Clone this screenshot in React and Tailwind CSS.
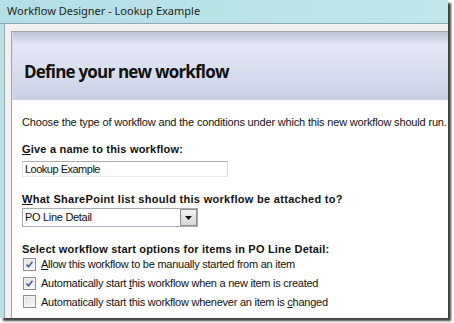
import { useState } from 'react';

const body = { fontFamily: "Tahoma, 'Liberation Sans', Arial, sans-serif" };

function Check({ checked }) {
  return (
    <span className="w-[13px] h-[13px] shrink-0 border border-[#8f8f8f] bg-gradient-to-br from-[#dcdcdc] to-[#fafafa] flex items-center justify-center">
      <span className="w-[11px] h-[11px] border border-[#f4f4f4] bg-gradient-to-br from-[#e0e0e0] to-[#f8f8f8] flex items-center justify-center">
        {checked && (
          <svg viewBox="0 0 9 9" className="w-[9px] h-[9px]">
            <path d="M1.5 4.5l2 2.2 4-5" stroke="#4a5e9e" strokeWidth="1.6" fill="none" />
          </svg>
        )}
      </span>
    </span>
  );
}

function Option({ checked, children }) {
  return (
    <label className="flex items-center gap-[5px] h-[18.75px]">
      <Check checked={checked} />
      <span className="text-[11px] text-[#111] tracking-[-0.25px] whitespace-nowrap">{children}</span>
    </label>
  );
}

export default function App() {
  const [name, setName] = useState('Lookup Example');

  return (
    <div className="w-[454px] h-[323px] bg-white overflow-hidden">
      <div className="w-[448px] h-[318px] flex flex-col bg-[#b8e1e6] shadow-[3px_3px_2px_rgba(0,0,0,0.75)]">
        {/* title bar */}
        <div className="h-[24px] flex items-center pl-[7px] bg-gradient-to-r from-[#b4dfe5] to-[#bfe6ea] border-b border-[#8eaab0] text-[11px] text-[#1e1e1e]" style={{ fontFamily: "'Segoe UI', 'Noto Sans', sans-serif" }}>
          Workflow Designer - Lookup Example
        </div>

        <div className="flex-1 flex pl-[4px] min-h-0">
          <div className="flex-1 flex flex-col bg-[#f1f1f1] border-l border-[#9aa7aa] pl-[6px] pt-[7px] min-h-0">
            <div className="flex-1 flex flex-col bg-white border-l border-t border-[#a3a3a3] min-h-0" style={body}>
              {/* header */}
              <div className="h-[68px] shrink-0 flex items-center pl-[11px] pt-[11px] bg-gradient-to-b from-[#bcc3d5] via-[#e6e9f5] via-20% to-[#c9d0e5] border-l border-[#d8dcec]">
                <h1 className="text-[17px] font-bold text-[#111] tracking-[-0.8px]" style={{ fontFamily: "'Segoe UI', 'Open Sans', sans-serif" }}>
                  Define your new workflow
                </h1>
              </div>

              {/* body */}
              <div className="pl-[10px] pt-[15px] text-[11px] text-[#111] whitespace-nowrap">
                <p className="leading-[15px] tracking-[-0.17px]">
                  Choose the type of workflow and the conditions under which this new workflow should run.
                </p>

                <p className="mt-[12px] leading-[15px] font-bold tracking-[0.2px]">
                  <span className="underline">G</span>ive a name to this workflow:
                </p>
                <input
                  value={name}
                  onChange={(e) => setName(e.target.value)}
                  className="mt-[4px] block w-[206px] h-[16px] px-[2px] text-[11px] tracking-[-0.5px] border border-[#abadb3] border-l-[#e2e3ea] border-r-[#dbdfe6] border-b-[#e3e9ef] outline-none"
                  style={body}
                />

                <p className="mt-[15px] leading-[15px] font-bold tracking-[0.3px]">
                  <span className="underline">W</span>hat SharePoint list should this workflow be attached to?
                </p>
                <div className="mt-[1px] w-[176px] h-[19px] flex items-center border border-[#a5acb5] bg-white">
                  <span className="flex-1 pl-[2px] tracking-[-0.3px]">PO Line Detail</span>
                  <span className="w-[17px] h-[17px] flex items-center justify-center border border-[#8e8f8f] bg-gradient-to-b from-[#f3f3f3] to-[#d6d6d6]">
                    <svg viewBox="0 0 7 4" className="w-[7px] h-[4px]">
                      <path d="M0 0h7L3.5 4z" fill="#111" />
                    </svg>
                  </span>
                </div>

                <p className="mt-[15px] leading-[15px] font-bold tracking-[0.19px]">
                  Select workflow start options for items in PO Line Detail:
                </p>
                <div className="mt-[-2px] pl-[1px] flex flex-col">
                  <Option checked>
                    <span className="underline">A</span>llow this workflow to be manually started from an item
                  </Option>
                  <Option checked>
                    Automatically start <span className="underline">t</span>his workflow when a new item is created
                  </Option>
                  <Option>
                    Automatically start this workflow whenever an item is <span className="underline">c</span>hanged
                  </Option>
                </div>
              </div>
            </div>
          </div>
        </div>
      </div>
    </div>
  );
}
